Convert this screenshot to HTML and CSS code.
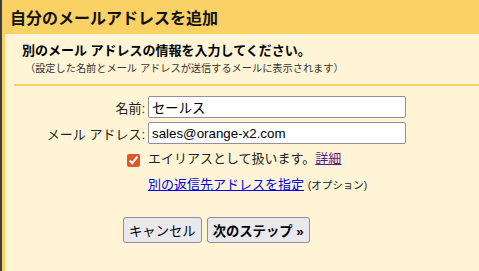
FILE: index.html
```html
<!DOCTYPE html>
<html>
<head>
<meta charset="UTF-8">
<title>自分のメールアドレスを追加</title>
<link rel="stylesheet" href="styles.css">
</head>
<body>
  <div class="dialog">
    <div class="dialog-title">自分のメールアドレスを追加</div>
    <div class="dialog-body">
      <div class="intro">
        <div class="intro-head">別のメール アドレスの情報を入力してください。</div>
        <div class="intro-note">（設定した名前とメール アドレスが送信するメールに表示されます）</div>
      </div>
      <div class="separator"></div>

      <div class="form-grid">
        <label class="form-label" for="name">名前:</label>
        <input class="form-input" id="name" type="text" value="セールス">

        <label class="form-label" for="address">メール アドレス:</label>
        <input class="form-input" id="address" type="text" value="sales@orange-x2.com">

        <div class="form-label">
          <input class="alias-check" id="alias" type="checkbox" checked>
        </div>
        <div class="form-text">
          <label for="alias">エイリアスとして扱います。</label><a class="visited" href="#">詳細</a>
        </div>

        <div></div>
        <div class="form-text">
          <a href="#">別の返信先アドレスを指定</a> <span class="option">(オプション)</span>
        </div>
      </div>

      <div class="buttons">
        <button class="btn">キャンセル</button>
        <button class="btn btn-primary">次のステップ »</button>
      </div>
    </div>
  </div>
</body>
</html>
```

FILE: styles.css
```css
html, body {
  height: 100%;
}

body {
  margin: 0;
  font-family: "Liberation Sans", "Noto Sans CJK JP", sans-serif;
  color: #222;
}

.dialog {
  height: 100%;
  border-left: 2px solid #3d3d3d;
  background-color: #fad165;
  display: flex;
  flex-direction: column;
}

.dialog-title {
  height: 34px;
  box-sizing: border-box;
  padding: 6px 8px 0;
  line-height: 26px;
  font-size: 16px;
  font-weight: bold;
  color: #111;
}

.dialog-body {
  flex: 1;
  margin-left: 3px;
  background-color: #fff5d6;
}

.intro {
  padding: 8px 0 7px 17px;
}

.intro-head {
  font-size: 13px;
  font-weight: bold;
  line-height: 18px;
  color: #000;
}

.intro-note {
  font-size: 10.2px;
  line-height: 17px;
  padding-left: 3px;
  color: #333;
}

/* 黄色の区切り線 */
.separator {
  margin-left: 9px;
  height: 2px;
  background-color: #fad165;
}

.form-grid {
  display: grid;
  grid-template-columns: 140px 258px;
  column-gap: 3px;
  row-gap: 4px;
  padding-top: 10px;
  font-size: 13px;
  align-items: center;
}

.form-label {
  text-align: right;
  color: #222;
}

.form-input {
  height: 22px;
  box-sizing: border-box;
  margin: 0;
  padding: 0 3px;
  border: 1px solid #8f8f9d;
  border-radius: 2px;
  background: #fff;
  font-family: "Liberation Sans", "Noto Sans CJK JP", sans-serif;
  font-size: 13.33px;
  color: #000;
}

.alias-check {
  width: 13px;
  height: 13px;
  margin: 0 5px 0 0;
  vertical-align: middle;
  accent-color: #e0582a;
}

.form-text {
  white-space: nowrap;
  line-height: 22px;
}

.form-text a {
  color: #0000ee;
}

.form-text a.visited {
  color: #551a8b;
}

.option {
  font-size: 10.5px;
  color: #222;
}

.buttons {
  padding: 21px 0 0 118px;
  display: flex;
  gap: 5px;
}

.btn {
  height: 26px;
  padding: 0 5px;
  border: 1px solid #8f8f9d;
  border-radius: 3px;
  background-color: #e9e9ed;
  font-family: "Liberation Sans", "Noto Sans CJK JP", sans-serif;
  font-size: 13.33px;
  color: #000;
}

.btn-primary {
  font-weight: bold;
}
```
